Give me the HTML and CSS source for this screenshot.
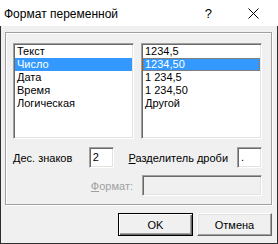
FILE: index.html
```
<!DOCTYPE html>
<html lang="ru">
<head>
  <meta charset="UTF-8">
  <title>Формат переменной</title>
  <link rel="stylesheet" href="styles.css">
</head>
<body>
  <div class="window">
    <div class="titlebar">
      <span class="title">Формат переменной</span>
      <span class="help">?</span>
      <svg class="close" width="11" height="11" viewBox="0 0 11 11">
        <path d="M0.5 0.5 L10.5 10.5 M10.5 0.5 L0.5 10.5" stroke="#000" stroke-width="1" fill="none"/>
      </svg>
    </div>

    <div class="content">
      <div class="group">
        <div class="lists">
          <div class="listbox">
            <div class="item">Текст</div>
            <div class="item selected">Число</div>
            <div class="item">Дата</div>
            <div class="item">Время</div>
            <div class="item">Логическая</div>
          </div>
          <div class="listbox">
            <div class="item">1234,5</div>
            <div class="item selected focused">1234,50</div>
            <div class="item">1 234,5</div>
            <div class="item">1 234,50</div>
            <div class="item">Другой</div>
          </div>
        </div>

        <div class="row">
          <label class="lbl-dec"><u>Д</u>ес. знаков</label>
          <div class="field small">2</div>
          <label class="lbl-sep"><u>Р</u>азделитель дроби</label>
          <div class="field small">.</div>
        </div>

        <div class="row format-row">
          <label class="lbl-fmt disabled"><u>Ф</u>ормат:</label>
          <div class="field wide disabled-field"></div>
        </div>
      </div>

      <div class="buttons">
        <button class="btn default">OK</button>
        <button class="btn">Отмена</button>
      </div>
    </div>
  </div>
</body>
</html>
```

FILE: styles.css
```
body {
  margin: 0;
  padding: 0;
  background: #f0f0f0;
  font-family: 'Liberation Sans', Arial, sans-serif;
  font-size: 11px;
  color: #000;
}

.window {
  width: 278px;
  height: 244px;
  box-sizing: border-box;
  border: 1px solid #2e2e2e;
  border-top: none;
  display: flex;
  flex-direction: column;
  background: #f0f0f0;
}

.titlebar {
  height: 26px;
  background: #fff;
  display: flex;
  align-items: center;
  padding-left: 4px;
  margin: 0 -1px;
  flex-shrink: 0;
}

.title {
  font-size: 12px;
  flex-grow: 1;
  padding-top: 1px;
}

.help {
  font-size: 13px;
  margin-right: 36px;
  padding-top: 1px;
}

.close {
  margin-right: 19px;
}

.content {
  padding: 6px 5px 0 4px;
  display: flex;
  flex-direction: column;
}

.group {
  height: 173px;
  box-sizing: border-box;
  border: 1px solid #a0a0a0;
  box-shadow: inset 1px 1px 0 #fff, 1px 1px 0 #fff;
  padding: 10px 9px 0 7px;
}

.lists {
  display: flex;
  gap: 7px;
}

.listbox {
  width: 121px;
  height: 96px;
  box-sizing: border-box;
  background: #fff;
  border: 1px solid;
  border-color: #a0a0a0 #fff #fff #a0a0a0;
  box-shadow: inset 1px 1px 0 #696969, inset -1px -1px 0 #e3e3e3;
  padding: 1px;
}

.item {
  height: 13px;
  line-height: 13px;
  padding-left: 2px;
  white-space: nowrap;
}

.item.selected {
  background: #3399ff;
  color: #fff;
}

.item.focused {
  outline: 1px dotted #cc6600;
  outline-offset: -1px;
}

.row {
  display: flex;
  align-items: center;
  margin-top: 8px;
}

.format-row {
  justify-content: flex-end;
  margin-top: 7px;
}

.lbl-dec {
  width: 76px;
}

.lbl-sep {
  margin-left: 15px;
  width: 109px;
}

.lbl-fmt {
  margin-right: 9px;
}

.disabled {
  color: #a0a0a0;
}

.field {
  height: 21px;
  box-sizing: border-box;
  background: #fff;
  border: 1px solid;
  border-color: #a0a0a0 #fff #fff #a0a0a0;
  box-shadow: inset 1px 1px 0 #696969, inset -1px -1px 0 #e3e3e3;
  padding: 3px 0 0 3px;
}

.field.small {
  width: 25px;
}

.field.wide {
  width: 120px;
}

.disabled-field {
  background: #f0f0f0;
}

.buttons {
  display: flex;
  justify-content: flex-end;
  gap: 4px;
  margin-top: 8px;
  padding-right: 0;
}

.btn {
  width: 75px;
  height: 23px;
  box-sizing: border-box;
  font-family: 'Liberation Sans', Arial, sans-serif;
  font-size: 11px;
  background: #f0f0f0;
  border: 1px solid;
  border-color: #fff #696969 #696969 #fff;
  box-shadow: inset -1px -1px 0 #a0a0a0, inset 1px 1px 0 #e3e3e3;
  padding: 0;
  color: #000;
}

.btn.default {
  border: 1px solid #000;
  box-shadow: inset 1px 1px 0 #fff, inset -1px -1px 0 #696969, inset -2px -2px 0 #a0a0a0;
}
```
